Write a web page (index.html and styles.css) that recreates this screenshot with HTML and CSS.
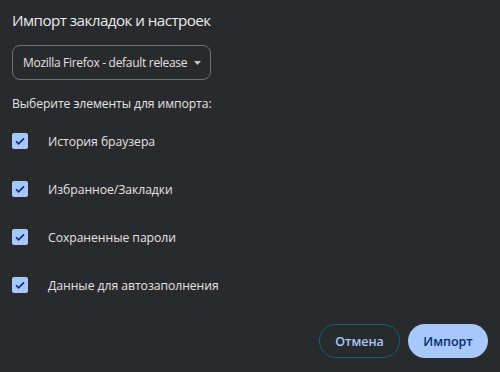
FILE: index.html
```html
<!DOCTYPE html>
<html lang="ru">
<head>
<meta charset="utf-8">
<link rel="stylesheet" href="styles.css">
</head>
<body>
<div class="dialog">
  <h1 class="title">Импорт закладок и настроек</h1>
  <div class="select">
    <span class="select-text">Mozilla Firefox - default release</span>
    <svg class="caret" width="7" height="4" viewBox="0 0 7 4"><path d="M0 0h7L3.5 4z" fill="#c4c7c5"/></svg>
  </div>
  <p class="hint">Выберите элементы для импорта:</p>
  <ul class="items">
    <li class="item"><span class="box"><svg width="12" height="10" viewBox="0 0 12 10"><path d="M2 5.2l2.6 2.6L10 2.4" fill="none" stroke="#062e6f" stroke-width="1.6"/></svg></span><span class="label">История браузера</span></li>
    <li class="item"><span class="box"><svg width="12" height="10" viewBox="0 0 12 10"><path d="M2 5.2l2.6 2.6L10 2.4" fill="none" stroke="#062e6f" stroke-width="1.6"/></svg></span><span class="label">Избранное/Закладки</span></li>
    <li class="item"><span class="box"><svg width="12" height="10" viewBox="0 0 12 10"><path d="M2 5.2l2.6 2.6L10 2.4" fill="none" stroke="#062e6f" stroke-width="1.6"/></svg></span><span class="label">Сохраненные пароли</span></li>
    <li class="item"><span class="box"><svg width="12" height="10" viewBox="0 0 12 10"><path d="M2 5.2l2.6 2.6L10 2.4" fill="none" stroke="#062e6f" stroke-width="1.6"/></svg></span><span class="label">Данные для автозаполнения</span></li>
  </ul>
  <div class="actions">
    <button class="btn btn-cancel">Отмена</button>
    <button class="btn btn-primary">Импорт</button>
  </div>
</div>
</body>
</html>
```
FILE: styles.css
```css
html, body {
  margin: 0;
  padding: 0;
  background: #292a2d;
}
body {
  width: 500px;
  height: 372px;
  overflow: hidden;
  font-family: "Open Sans", "Noto Sans", sans-serif;
  color: #e3e3e3;
}
.dialog {
  padding: 9px 12px 0 12px;
  display: flex;
  flex-direction: column;
}
.title {
  margin: 0;
  font-size: 15.2px;
  font-weight: 400;
  line-height: 22px;
  letter-spacing: -0.55px;
  color: #ececec;
}
.select {
  margin-top: 14px;
  width: 199px;
  height: 35px;
  box-sizing: border-box;
  border: 1px solid #6f7175;
  border-radius: 8px;
  display: flex;
  align-items: center;
  padding-left: 10px;
  gap: 7px;
  white-space: nowrap;
}
.select-text {
  font-size: 12px;
  color: #e3e3e3;
  letter-spacing: -0.3px;
}
.hint {
  margin: 15px 0 0 0;
  font-size: 12.2px;
  line-height: 18px;
  color: #e3e3e3;
  letter-spacing: -0.1px;
}
.items {
  list-style: none;
  margin: 20px 0 0 0;
  padding: 0;
  display: flex;
  flex-direction: column;
  gap: 32px;
}
.item {
  display: flex;
  align-items: center;
  height: 16px;
}
.box {
  width: 16px;
  height: 16px;
  border-radius: 2px;
  background: #a8c7fa;
  display: flex;
  align-items: center;
  justify-content: center;
}
.label {
  margin-left: 20px;
  font-size: 12.2px;
  color: #e3e3e3;
  letter-spacing: -0.05px;
}
.actions {
  margin-top: 31px;
  display: flex;
  justify-content: flex-end;
  gap: 8px;
}
.btn {
  height: 34px;
  border-radius: 17px;
  font-family: "Open Sans", "Noto Sans", sans-serif;
  font-size: 12.5px;
  font-weight: 600;
  padding: 0;
  cursor: pointer;
}
.btn-cancel {
  width: 81px;
  background: transparent;
  border: 1px solid #0e6579;
  color: #a8c7fa;
}
.btn-primary {
  width: 80px;
  background: #a8c7fa;
  border: none;
  color: #062e6f;
}
```
